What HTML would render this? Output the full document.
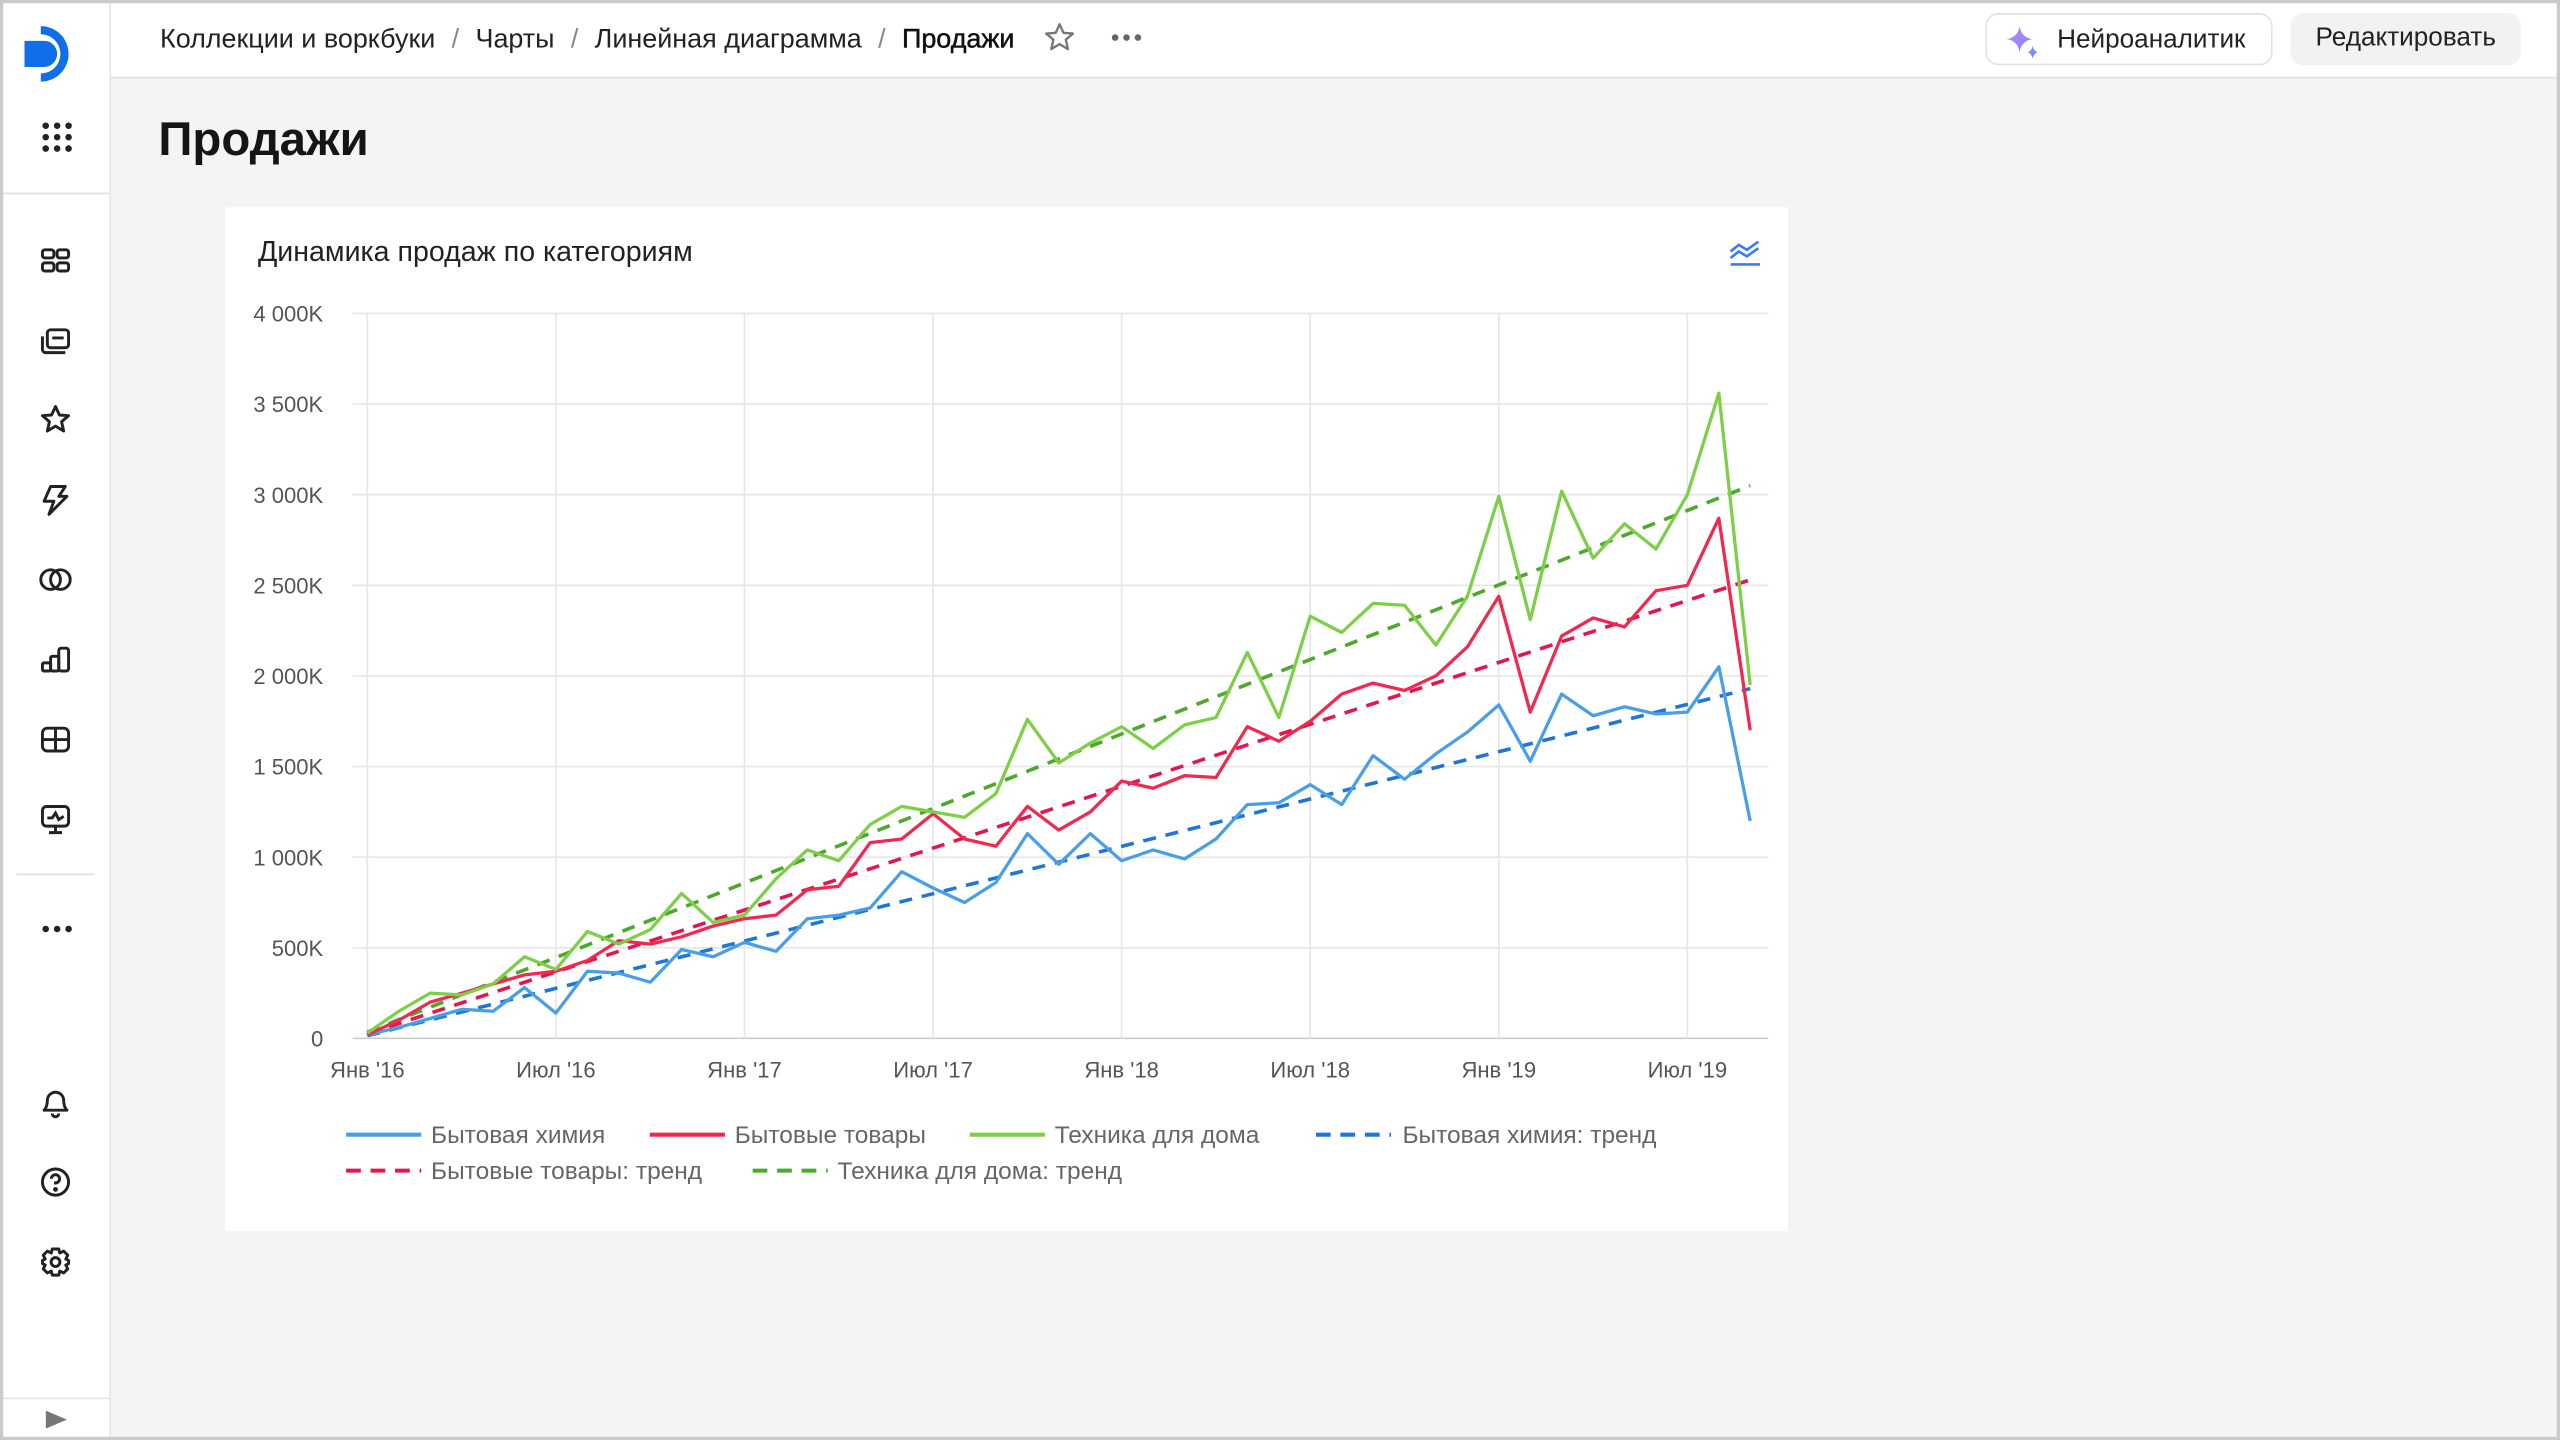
<!DOCTYPE html>
<html><head><meta charset="utf-8"><style>
html,body{margin:0;padding:0;width:2560px;height:1440px;overflow:hidden;background:#fff}
#w{position:absolute;left:0;top:0;width:1568px;height:882px;transform:scale(1.632653);transform-origin:0 0;background:#f3f4f6;font-family:"Liberation Sans",sans-serif;color:#222}
#bd{position:absolute;left:0;top:0;width:1568px;height:882px;box-sizing:border-box;border:2px solid #cbcbcb;pointer-events:none}
#side{position:absolute;left:0;top:0;width:67px;height:882px;background:#fff;border-right:1px solid #e5e5e5}
#top{position:absolute;left:68px;top:0;right:0;height:47px;background:#fff;border-bottom:1px solid #e3e3e3}
.bc{position:absolute;top:15px;font-size:16.5px;color:#222;white-space:nowrap}
.bc span.s{color:#888;margin:0 10px}
.ic{position:absolute;left:23px;width:22px;height:22px}
.btn{position:absolute;top:8px;height:32px;border-radius:8px;font-size:16px;line-height:32px;box-sizing:border-box}
#card{position:absolute;left:138px;top:127px;width:957px;height:627px;background:#fff}
</style></head><body><div id="w">
<div id="side">
 <svg style="position:absolute;left:13px;top:12px" width="42" height="42" viewBox="0 0 42 42"><path d="M12 4 A17 17 0 0 1 12 38 L12 33 A12 12 0 0 0 12 9Z" fill="#0f6ee8"/><path d="M2 13 L14 13 A8 8 0 0 1 14 29 L2 29Z" fill="#0f6ee8"/></svg>
 <svg style="position:absolute;left:25px;top:74px" width="20" height="20" viewBox="0 0 20 20" fill="#222"><circle cx="3" cy="3" r="2"/><circle cx="10" cy="3" r="2"/><circle cx="17" cy="3" r="2"/><circle cx="3" cy="10" r="2"/><circle cx="10" cy="10" r="2"/><circle cx="17" cy="10" r="2"/><circle cx="3" cy="17" r="2"/><circle cx="10" cy="17" r="2"/><circle cx="17" cy="17" r="2"/></svg>
 <div style="position:absolute;left:0;top:118px;width:67px;height:1px;background:#e0e0e0"></div>
 <svg class="ic" style="top:149px" viewBox="0 0 22 22" fill="none" stroke="#222" stroke-width="1.8"><rect x="3" y="4" width="7" height="5" rx="1.5"/><rect x="12" y="4" width="7" height="5" rx="1.5"/><rect x="3" y="12" width="7" height="5" rx="1.5"/><rect x="12" y="12" width="7" height="5" rx="1.5"/></svg>
 <svg class="ic" style="top:197px" viewBox="0 0 22 22" fill="none" stroke="#222" stroke-width="1.8"><path d="M3 9 V17 A2 2 0 0 0 5 19 H17"/><rect x="6" y="5" width="13" height="11" rx="2"/><path d="M9 10 H16"/></svg>
 <svg class="ic" style="top:246px" viewBox="0 0 22 22" fill="none" stroke="#222" stroke-width="1.8" stroke-linejoin="round"><path d="M11 3 L13.4 8.2 L19 8.6 L14.7 12.3 L16 18 L11 15 L6 18 L7.3 12.3 L3 8.6 L8.6 8.2Z"/></svg>
 <svg class="ic" style="top:295px" viewBox="0 0 22 22" fill="none" stroke="#222" stroke-width="1.8" stroke-linejoin="round"><path d="M8 3 H17 L13 9 H18 L7 20 L10 12 H4Z"/></svg>
 <svg class="ic" style="top:344px" viewBox="0 0 22 22" fill="none" stroke="#222" stroke-width="1.8"><circle cx="8" cy="11" r="6"/><circle cx="14" cy="11" r="6"/></svg>
 <svg class="ic" style="top:393px" viewBox="0 0 22 22" fill="none" stroke="#222" stroke-width="1.8"><rect x="3" y="13" width="5" height="5" rx="1"/><rect x="8" y="9" width="5" height="9" rx="1"/><rect x="13" y="4" width="6" height="14" rx="1.5"/></svg>
 <svg class="ic" style="top:442px" viewBox="0 0 22 22" fill="none" stroke="#222" stroke-width="1.8"><rect x="3" y="4" width="16" height="14" rx="3"/><path d="M3 11 H19 M11 4 V18"/></svg>
 <svg class="ic" style="top:491px" viewBox="0 0 22 22" fill="none" stroke="#222" stroke-width="1.8"><rect x="3" y="3" width="16" height="12" rx="2.5"/><path d="M6 10 L9 10 L11 7 L13 11 L16 9 M11 15 V19 M7 19 H15"/></svg>
 <div style="position:absolute;left:10px;top:535px;width:48px;height:1px;background:#e0e0e0"></div>
 <svg style="position:absolute;left:25px;top:566px" width="20" height="6" viewBox="0 0 20 6" fill="#222"><circle cx="3" cy="3" r="2"/><circle cx="10" cy="3" r="2"/><circle cx="17" cy="3" r="2"/></svg>
 <svg class="ic" style="top:664px" viewBox="0 0 22 22" fill="none" stroke="#222" stroke-width="1.8" stroke-linejoin="round"><path d="M4 16 Q6 14 6 10 A5 5 0 0 1 16 10 Q16 14 18 16Z M9 18 A2 2 0 0 0 13 18"/></svg>
 <svg class="ic" style="top:713px" viewBox="0 0 22 22" fill="none" stroke="#222" stroke-width="1.8"><circle cx="11" cy="11" r="8"/><path d="M8.5 9 A2.5 2.5 0 1 1 11 11.5 V12.5"/><circle cx="11" cy="15.5" r="0.6" fill="#222"/></svg>
 <svg class="ic" style="top:762px" viewBox="0 0 22 22" fill="none" stroke="#222" stroke-width="1.8" stroke-linejoin="round"><path d="M9 3 H13 L13.6 5.5 L16 4.3 L18.5 6.8 L17.3 9.2 L19 10 V12 L17.3 12.8 L18.5 15.2 L16 17.7 L13.6 16.5 L13 19 H9 L8.4 16.5 L6 17.7 L3.5 15.2 L4.7 12.8 L3 12 V10 L4.7 9.2 L3.5 6.8 L6 4.3 L8.4 5.5Z"/><circle cx="11" cy="11" r="2.7"/></svg>
 <div style="position:absolute;left:0;top:856px;width:67px;height:1px;background:#e5e5e5"></div>
 <svg style="position:absolute;left:28px;top:864px" width="13" height="11" viewBox="0 0 13 11"><path d="M0 0 L13 5.5 L0 11Z" fill="#777"/></svg>
</div>
<div id="top">
 <div class="bc" style="left:30px">Коллекции и воркбуки<span class="s">/</span>Чарты<span class="s">/</span>Линейная диаграмма<span class="s">/</span><span style="color:#111;-webkit-text-stroke:0.3px #111">Продажи</span></div>
 <svg style="position:absolute;left:571px;top:13px" width="20" height="20" viewBox="0 0 22 22" fill="none" stroke="#777" stroke-width="1.6" stroke-linejoin="round"><path d="M11 2 L13.6 7.8 L20 8.3 L15.2 12.4 L16.6 18.8 L11 15.4 L5.4 18.8 L6.8 12.4 L2 8.3 L8.4 7.8Z"/></svg>
 <svg style="position:absolute;left:612px;top:20px" width="20" height="6" viewBox="0 0 20 6" fill="#666"><circle cx="3" cy="3" r="2"/><circle cx="10" cy="3" r="2"/><circle cx="17" cy="3" r="2"/></svg>
 <div class="btn" style="left:1148px;width:176px;border:1px solid #e2e2e2;background:#fff"><svg style="position:absolute;left:11px;top:6px" width="22" height="22" viewBox="0 0 22 22"><defs><linearGradient id="g" x1="0" y1="0" x2="1" y2="1"><stop offset="0" stop-color="#c57df5"/><stop offset="1" stop-color="#7a8bff"/></linearGradient></defs><path d="M9 1 Q10 8 17 9 Q10 10 9 17 Q8 10 1 9 Q8 8 9 1Z" fill="url(#g)"/><path d="M17 13 Q17.5 16 20 17 Q17.5 18 17 21 Q16.5 18 14 17 Q16.5 16 17 13Z" fill="#7a8bff"/></svg><span style="position:absolute;left:43px;color:#222">Нейроаналитик</span></div>
 <div class="btn" style="left:1335px;width:141px;background:#f2f2f2;text-align:center;color:#222">Редактировать</div>
</div>
<div style="position:absolute;left:97px;top:70px;font-size:29px;font-weight:bold;color:#151515">Продажи</div>
<div id="card">
 <div style="position:absolute;left:20px;top:17px;font-size:17.5px;color:#222">Динамика продаж по категориям</div>
 <svg style="position:absolute;left:920px;top:19px" width="22" height="18" viewBox="0 0 22 18" fill="none" stroke="#3b7cf0" stroke-width="1.6"><path d="M2 8 L7 4 L12 7 L19 2 M2 12 L7 8 L12 11 L19 6 M2 16 H20"/></svg>
</div>
<svg id="ch" style="position:absolute;left:0;top:0" width="1568" height="882" font-family="Liberation Sans, sans-serif" font-size="13.5" fill="#555">
 <g stroke="#e6e6e6" stroke-width="1" id="grid"></g>
 <g id="lbl"></g>
 <g id="lines" fill="none" stroke-width="2" stroke-linejoin="round"></g>
 <g font-size="15" fill="#666">
  <line x1="212" y1="695" x2="258" y2="695" stroke="#4a9ee8" stroke-width="2.5"/><text x="264" y="700">Бытовая химия</text>
  <line x1="398" y1="695" x2="444" y2="695" stroke="#f0294f" stroke-width="2.5"/><text x="450" y="700">Бытовые товары</text>
  <line x1="594" y1="695" x2="640" y2="695" stroke="#7ccf47" stroke-width="2.5"/><text x="646" y="700">Техника для дома</text>
  <line x1="806" y1="695" x2="852" y2="695" stroke="#1f77d4" stroke-width="2.5" stroke-dasharray="9 6"/><text x="859" y="700">Бытовая химия: тренд</text>
  <line x1="212" y1="717" x2="258" y2="717" stroke="#e0184f" stroke-width="2.5" stroke-dasharray="9 6"/><text x="264" y="722">Бытовые товары: тренд</text>
  <line x1="461" y1="717" x2="507" y2="717" stroke="#4da82b" stroke-width="2.5" stroke-dasharray="9 6"/><text x="513" y="722">Техника для дома: тренд</text>
 </g>
</svg>
<div id="bd"></div>
</div>
<script>
var ns="http://www.w3.org/2000/svg";
function el(p,t,a,tx){var e=document.createElementNS(ns,t);for(var k in a)e.setAttribute(k,a[k]);if(tx)e.textContent=tx;document.getElementById(p).appendChild(e);}
function X(i){return 225+19.25*i} function Y(v){return 636-v*0.111}
var yl=["0","500K","1 000K","1 500K","2 000K","2 500K","3 000K","3 500K","4 000K"];
for(var k=0;k<=8;k++){var y=Y(k*500);el("grid","line",{x1:216,x2:1083,y1:y,y2:y,stroke:k==0?"#ccc":"#e6e6e6"});el("lbl","text",{x:198,y:y+5,"text-anchor":"end"},yl[k]);}
var xl=["Янв '16","Июл '16","Янв '17","Июл '17","Янв '18","Июл '18","Янв '19","Июл '19"];
for(var k=0;k<8;k++){var x=X(k*6);el("grid","line",{x1:x,x2:x,y1:192,y2:636});el("lbl","text",{x:x,y:660,"text-anchor":"middle"},xl[k]);}
var G=[30,150,250,240,300,450,380,590,520,600,800,640,680,880,1040,980,1180,1280,1250,1220,1350,1760,1520,1630,1720,1600,1730,1770,2130,1770,2330,2240,2400,2390,2170,2440,2990,2310,3020,2650,2840,2700,3000,3560,1950];
var R=[20,100,200,250,300,350,370,430,540,520,560,620,660,680,820,840,1080,1100,1240,1100,1060,1280,1150,1250,1420,1380,1450,1440,1720,1640,1750,1900,1960,1920,2000,2160,2440,1800,2220,2320,2270,2470,2500,2870,1700];
var B=[20,60,110,160,150,280,140,370,360,310,490,450,530,480,660,680,720,920,830,750,860,1130,960,1130,980,1040,990,1100,1290,1300,1400,1290,1560,1430,1570,1690,1840,1530,1900,1780,1830,1790,1800,2050,1200];
function pl(a,c){var s=a.map(function(v,i){return X(i).toFixed(1)+","+Y(v).toFixed(1)}).join(" ");el("lines","polyline",{points:s,stroke:c});}
el("lines","line",{x1:X(0),y1:Y(15),x2:X(44),y2:Y(1930),stroke:"#1f77d4","stroke-dasharray":"8 6","stroke-width":2.2});
el("lines","line",{x1:X(0),y1:Y(25),x2:X(44),y2:Y(2530),stroke:"#e0184f","stroke-dasharray":"8 6","stroke-width":2.2});
el("lines","line",{x1:X(0),y1:Y(35),x2:X(44),y2:Y(3050),stroke:"#4da82b","stroke-dasharray":"8 6","stroke-width":2.2});
pl(B,"#4a9ee8");pl(R,"#f0294f");pl(G,"#7ccf47");
</script>
</body></html>
